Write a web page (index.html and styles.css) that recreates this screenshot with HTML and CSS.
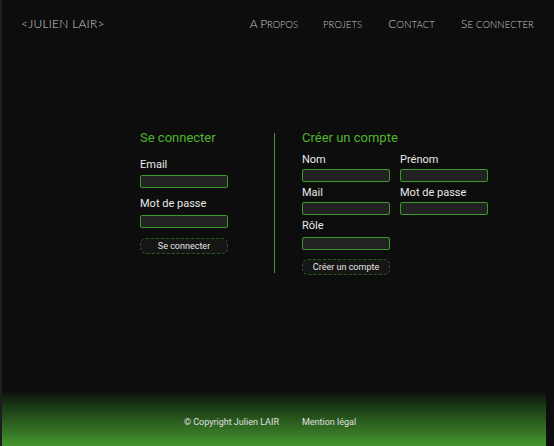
FILE: index.html
```html
<!DOCTYPE html>
<html lang="fr">
<head>
<meta charset="utf-8">
<title>Julien LAIR</title>
<link rel="stylesheet" href="styles.css">
</head>
<body>
<div class="page">
  <header class="header">
    <div class="logo">&lt;Julien LAIR&gt;</div>
    <nav class="nav">
      <a class="nav-link"><span class="cap">A P</span>ropos</a>
      <a class="nav-link">projets</a>
      <a class="nav-link"><span class="cap">C</span>ontact</a>
      <a class="nav-link"><span class="cap">S</span>e connecter</a>
    </nav>
  </header>
  <main class="main">
    <section class="login">
      <h2 class="title">Se connecter</h2>
      <label class="label">Email</label>
      <div class="input"></div>
      <label class="label second">Mot de passe</label>
      <div class="input"></div>
      <button class="btn">Se connecter</button>
    </section>
    <div class="divider"></div>
    <section class="register">
      <h2 class="title">Créer un compte</h2>
      <div class="grid">
        <div class="field"><label class="label small">Nom</label><div class="input"></div></div>
        <div class="field"><label class="label small">Prénom</label><div class="input"></div></div>
        <div class="field"><label class="label small">Mail</label><div class="input"></div></div>
        <div class="field"><label class="label small">Mot de passe</label><div class="input"></div></div>
        <div class="field role"><label class="label small">Rôle</label><div class="input"></div></div>
      </div>
      <button class="btn">Créer un compte</button>
    </section>
  </main>
  <footer class="footer">
    <span>© Copyright Julien LAIR</span>
    <span>Mention légal</span>
  </footer>
</div>
</body>
</html>
```
FILE: styles.css
```css
* { box-sizing: border-box; }
html, body { margin: 0; padding: 0; height: 100%; }
body {
  background: #0d0d0d;
  font-family: Roboto, "Liberation Sans", sans-serif;
  color: #e6e6e6;
}
.page {
  height: 446px;
  display: flex;
  flex-direction: column;
  border-left: 2px solid #1e1e1e;
}
.header {
  display: flex;
  justify-content: space-between;
  align-items: center;
  height: 46px;
  padding: 0 20px 0 19px;
}
.logo {
  font-family: Lato, "DejaVu Sans", sans-serif;
  font-weight: 300;
  text-transform: uppercase;
  font-size: 12px;
  letter-spacing: 0.25px;
  color: #d0d0d0;
}
.nav { display: flex; align-items: baseline; gap: 25px; }
.nav-link {
  font-family: Lato, "DejaVu Sans", sans-serif;
  font-weight: 300;
  text-transform: uppercase;
  font-size: 9.5px;
  letter-spacing: 0.15px;
  color: #c8c8c8;
}
.nav-link:first-child { letter-spacing: -0.1px; }
.nav-link .cap { font-size: 12px; }
.nav-link:nth-child(3) { margin-left: 1px; }
.nav-link:last-child { margin-left: 1px; }
.main {
  flex: 1;
  display: flex;
  justify-content: flex-start;
  align-items: flex-start;
  padding-top: 84px;
  padding-left: 138px;
}
.login { width: 88px; display: flex; flex-direction: column; }
.title {
  margin: 0 0 12px;
  font-size: 13px;
  font-weight: 400;
  color: #4fb52f;
  white-space: nowrap;
  line-height: 16px;
}
.label {
  font-size: 11px;
  line-height: 14px;
  color: #e8e8e8;
  white-space: nowrap;
  margin-bottom: 3px;
}
.label.second { margin-bottom: 4px; }
.input {
  height: 13px;
  width: 88px;
  background: #222;
  border: 1px solid #3c9a2a;
  border-radius: 2px;
}
.login .input { margin-bottom: 9px; }
.login .btn { margin-top: 1px; }
.btn {
  width: 88px;
  height: 16px;
  padding: 0;
  background: #151515;
  border: 1px dashed #2d5a22;
  border-radius: 6px;
  color: #e6e6e6;
  font-family: Roboto, "Liberation Sans", sans-serif;
  font-size: 9px;
  line-height: 14px;
  text-align: center;
}
.divider {
  width: 1px;
  height: 140px;
  margin: 3px 27px 0 46px;
  background: #3c9a2a;
}
.register { display: flex; flex-direction: column; }
.register .title { margin-bottom: 7px; }
.grid {
  display: grid;
  grid-template-columns: 88px 88px;
  column-gap: 10px;
  row-gap: 4px;
  margin-bottom: 10px;
}
.field { display: flex; flex-direction: column; }
.label.small { margin-bottom: 2px; }
.field.role .label.small { margin-bottom: 4px; }
.register .btn { margin-top: -1px; }
.footer {
  height: 56px;
  margin-right: 8px;
  background: linear-gradient(to bottom, #0d0d0d 0%, #1b3a15 30%, #45962f 100%);
  display: flex;
  justify-content: center;
  align-items: center;
  gap: 23px;
  padding-top: 8px;
  padding-right: 8px;
  font-size: 9px;
  color: #e0e0e0;
}
```
